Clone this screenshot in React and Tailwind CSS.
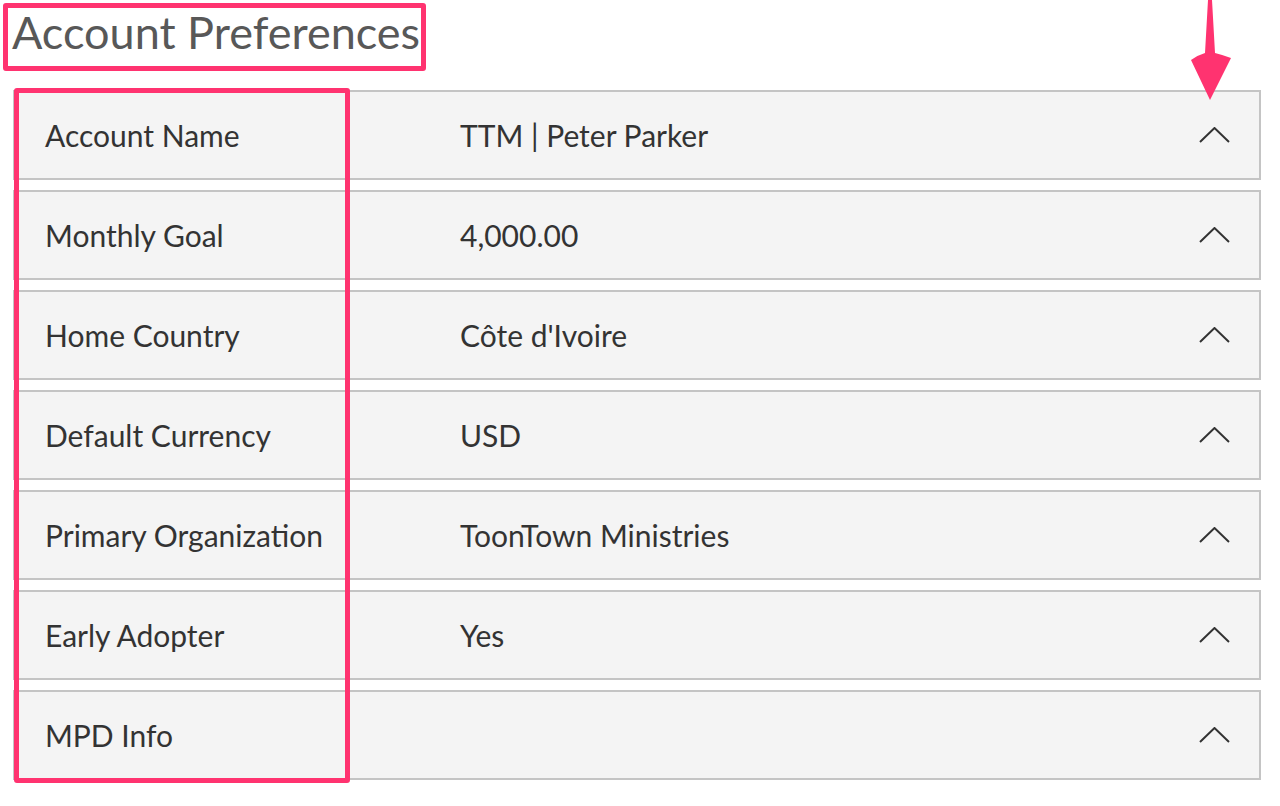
import React from "react";

const rows = [
  { label: "Account Name", value: "TTM | Peter Parker" },
  { label: "Monthly Goal", value: "4,000.00" },
  { label: "Home Country", value: "Côte d'Ivoire" },
  { label: "Default Currency", value: "USD" },
  { label: "Primary Organization", value: "ToonTown Ministries" },
  { label: "Early Adopter", value: "Yes" },
  { label: "MPD Info", value: "" },
];

const ChevronUp = () => (
  <svg width="31" height="16" viewBox="0 0 31 16" fill="none">
    <polyline points="1,15 15.5,1 30,15" stroke="#333" strokeWidth="2" />
  </svg>
);

const Arrow = () => (
  <svg
    className="absolute left-[1185px] top-0"
    width="50"
    height="104"
    viewBox="0 0 50 104"
    fill="#ff3370"
  >
    <path d="M23 0 L27 0 L30 53 Q38 55 46 58 L25 100 L6 60 Q13 55 20 53 Z" />
  </svg>
);

export default function App() {
  return (
    <div
      className="relative w-[1280px] h-[806px] bg-white overflow-hidden"
      style={{ fontFamily: "Lato, 'Open Sans', sans-serif" }}
    >
      <div className="ml-[3px] mt-[3px] w-[423px] h-[68px] border-[5px] border-[#ff3370] rounded-[3px] pl-[4px] pt-[2px]">
        <h1 className="text-[45px] leading-none text-[#585858] whitespace-nowrap">
          Account Preferences
        </h1>
      </div>

      <div className="mt-[19px] ml-[13px] w-[1248px] flex flex-col gap-[10px]">
        {rows.map((row) => (
          <div
            key={row.label}
            className="h-[90px] flex items-center bg-[#f4f4f4] border-2 border-[#c4c4c4] pl-[30px] pr-[29px] text-[30px] text-[#333]"
          >
            <div className="w-[415px] shrink-0">{row.label}</div>
            <div className="flex-1">{row.value}</div>
            <ChevronUp />
          </div>
        ))}
      </div>

      {/* annotation overlays */}
      <div className="absolute left-[14px] top-[88px] w-[336px] h-[695px] border-[5px] border-[#ff3370] rounded-[3px]" />
      <Arrow />
    </div>
  );
}
